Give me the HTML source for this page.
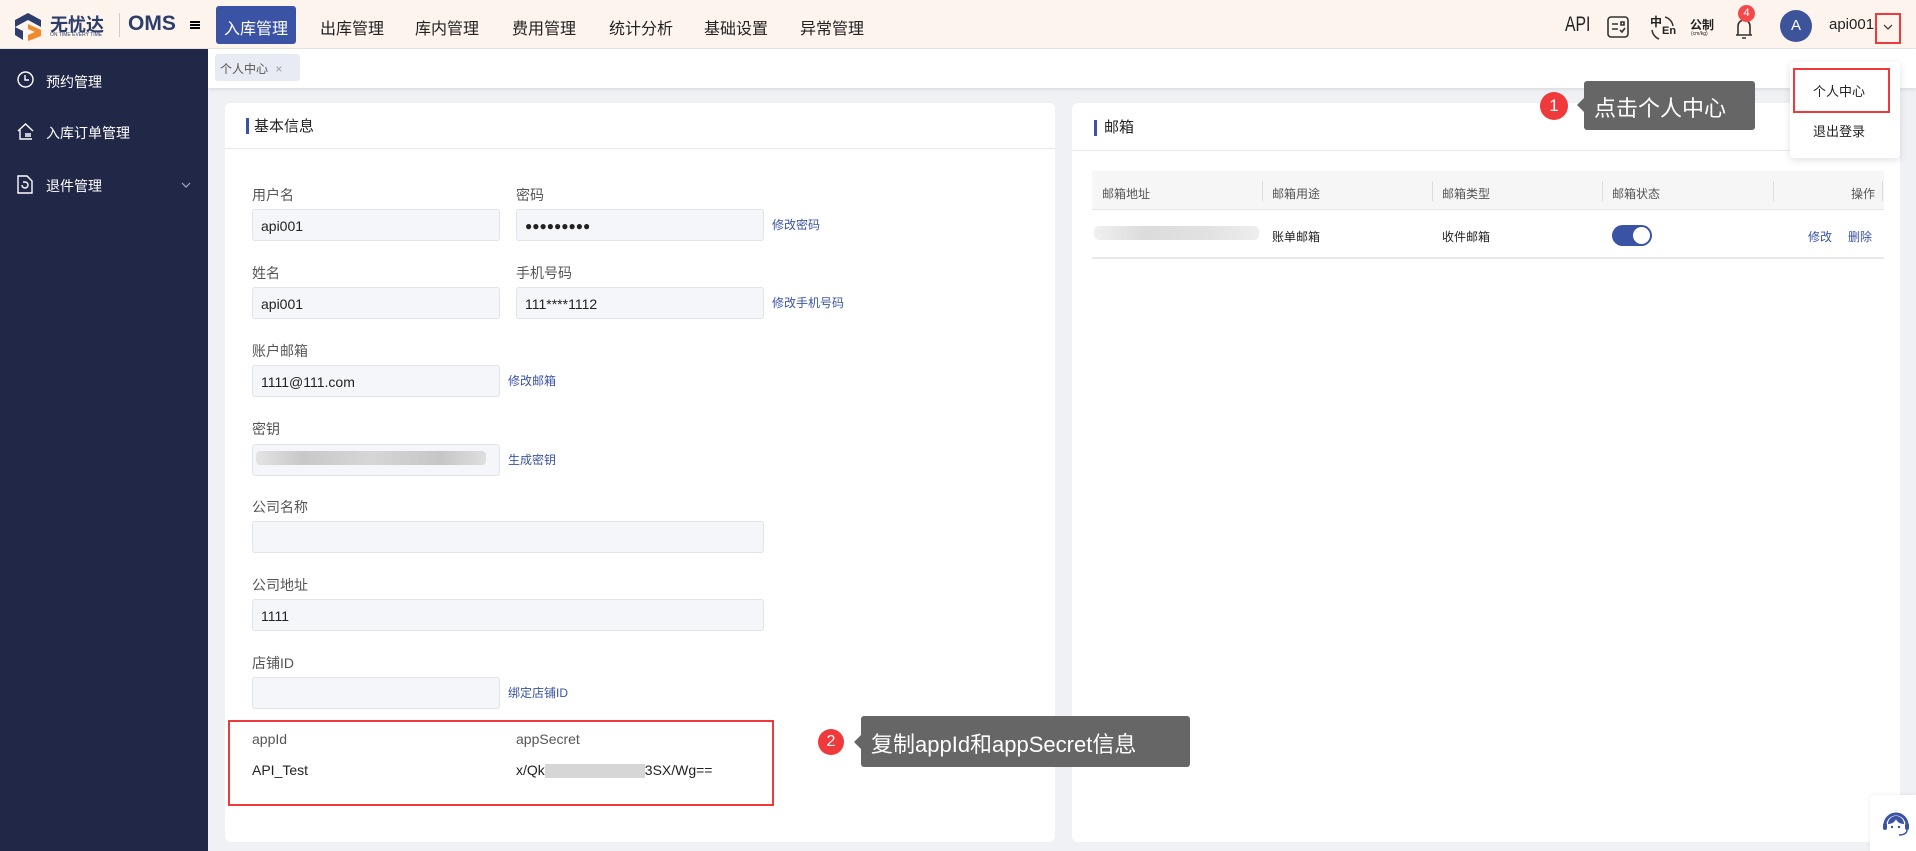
<!DOCTYPE html>
<html><head><meta charset="utf-8">
<style>
*{box-sizing:border-box;margin:0;padding:0}
body{width:1916px;height:851px;overflow:hidden;background:#eff1f5;font-family:"Liberation Sans","Noto Sans CJK SC",sans-serif;position:relative;color:#222}
.abs{position:absolute}
.hdr{left:0;top:0;width:1916px;height:49px;background:#fdf4ee;border-bottom:1px solid #e3e3e3}
.nav{top:15px;font-size:16px;color:#222}
.side{left:0;top:49px;width:208px;height:802px;background:#212847}
.si{left:46px;font-size:14px;color:#fff}
.panel{background:#fff;border-radius:6px}
.lbl{font-size:14px;color:#555}
.inp{background:#f5f6fa;border:1px solid #dfe3ea;border-radius:3px;height:32px;font-size:14px;padding:8px 8px;color:#222}
.lnk{font-size:12px;color:#3a53a4}
.th{font-size:12px;color:#555;top:185px}
</style></head><body>
<div class="abs hdr"></div>
<!-- logo -->
<svg class="abs" style="left:13px;top:12px" width="30" height="30" viewBox="0 0 30 30"><path d="M15 1 L28 8 L28 15 L15 8 L2 15 L2 8 Z" fill="#2d3e6b"/><path d="M2 15 L10 19 L10 28 L2 23Z" fill="#2d3e6b"/><path d="M15 12 L28 18 L28 24 L15 29 L15 23 L22 20 L15 17Z" fill="#f08a2c"/></svg>
<div class="abs" style="left:50px;top:11px;font-size:18px;font-weight:bold;color:#2d3e6b">无忧达</div>
<div class="abs" style="left:50px;top:32px;font-size:5px;color:#2d3e6b">ON TIME EVERY TIME</div>
<div class="abs" style="left:119px;top:13px;width:1px;height:24px;background:#ccc"></div>
<div class="abs" style="left:128px;top:12px;font-size:21px;font-weight:bold;color:#2d3e6b">OMS</div>
<div class="abs" style="left:190px;top:21px;width:10px;height:2px;background:#000;box-shadow:0 3px 0 #000,0 6px 0 #000"></div>
<div class="abs" style="left:216px;top:6px;width:80px;height:38px;background:#3a53a4;border-radius:3px"></div>
<div class="abs nav" style="left:224px;color:#fff">入库管理</div>
<div class="abs nav" style="left:320px">出库管理</div>
<div class="abs nav" style="left:415px">库内管理</div>
<div class="abs nav" style="left:512px">费用管理</div>
<div class="abs nav" style="left:609px">统计分析</div>
<div class="abs nav" style="left:704px">基础设置</div>
<div class="abs nav" style="left:800px">异常管理</div>
<!-- right icons -->
<div class="abs" style="left:1565px;top:13px;font-size:21px;transform:scaleX(.75);transform-origin:left">API</div>
<svg class="abs" style="left:1607px;top:16px" width="22" height="22" viewBox="0 0 22 22" fill="none" stroke="#333" stroke-width="1.6"><rect x="1" y="1" width="20" height="20" rx="3"/><path d="M5 8h6M5 13h6M14 6h3v3h-3zM13 14l2 2 3-4"/></svg>
<div class="abs" style="left:1650px;top:13px;font-size:12px;font-weight:bold">中</div>
<div class="abs" style="left:1662px;top:25px;font-size:11px;font-weight:bold">En</div>
<svg class="abs" style="left:1648px;top:14px" width="30" height="28" viewBox="0 0 30 28" fill="none" stroke="#333" stroke-width="1.5"><path d="M17 3a11 11 0 0 1 8 9M4 16a11 11 0 0 0 7 9"/></svg>
<div class="abs" style="left:1690px;top:16px;font-size:12px;font-weight:bold">公制</div>
<div class="abs" style="left:1691px;top:31px;font-size:5px">(cm/kg)</div>
<svg class="abs" style="left:1735px;top:17px" width="18" height="24" viewBox="0 0 18 24" fill="none" stroke="#333" stroke-width="1.6"><path d="M3 18V9a6 6 0 0 1 12 0v9M1 18h16M7 21h4"/></svg>
<div class="abs" style="left:1738px;top:5px;width:17px;height:17px;border-radius:50%;background:#f5484a;color:#fff;font-size:11px;text-align:center;line-height:17px">4</div>
<div class="abs" style="left:1780px;top:10px;width:32px;height:32px;border-radius:50%;background:#3d549b;color:#fff;font-size:15px;text-align:center;line-height:32px">A</div>
<div class="abs" style="left:1829px;top:16px;font-size:15px">api001</div>
<div class="abs" style="left:1875px;top:13px;width:26px;height:31px;border:2px solid #f0393a"></div>
<svg class="abs" style="left:1883px;top:24px" width="10" height="7" viewBox="0 0 10 7" fill="none" stroke="#444" stroke-width="1.3"><path d="M1 1l4 4 4-4"/></svg>

<!-- sidebar -->
<div class="abs side"></div>
<svg class="abs" style="left:17px;top:71px" width="17" height="17" viewBox="0 0 17 17" fill="none" stroke="#fff" stroke-width="1.4"><circle cx="8.5" cy="8.5" r="7.5"/><path d="M8 4v5h4"/></svg>
<div class="abs si" style="top:72px">预约管理</div>
<svg class="abs" style="left:17px;top:123px" width="17" height="17" viewBox="0 0 17 17" fill="none" stroke="#fff" stroke-width="1.4"><path d="M1 8L8.5 1 16 8M3 7v9h12M8 11h6M8 13h6"/></svg>
<div class="abs si" style="top:123px">入库订单管理</div>
<svg class="abs" style="left:17px;top:175px" width="16" height="19" viewBox="0 0 16 19" fill="none" stroke="#fff" stroke-width="1.4"><path d="M1 1h9l5 5v12H1zM5 10a3 3 0 1 0 3-3h-2"/></svg>
<div class="abs si" style="top:176px">退件管理</div>
<svg class="abs" style="left:181px;top:182px" width="10" height="7" viewBox="0 0 10 7" fill="none" stroke="#aab" stroke-width="1.2"><path d="M1 1l4 4 4-4"/></svg>

<!-- tab bar -->
<div class="abs" style="left:208px;top:49px;width:1708px;height:39px;background:#fff;box-shadow:0 2px 3px rgba(0,0,0,.08)"></div>
<div class="abs" style="left:215px;top:54px;width:85px;height:27px;background:#e8ebf3;border-radius:3px;font-size:12px;color:#555;padding:6px 5px">个人中心 <span style="color:#999;margin-left:4px">×</span></div>

<!-- left panel -->
<div class="abs panel" style="left:225px;top:103px;width:830px;height:739px"></div>
<div class="abs" style="left:225px;top:148px;width:830px;height:1px;background:#e6e9ef"></div>
<div class="abs" style="left:246px;top:118px;width:3px;height:16px;background:#3a53a4"></div>
<div class="abs" style="left:254px;top:115px;font-size:15px">基本信息</div>

<div class="abs lbl" style="left:252px;top:185px">用户名</div>
<div class="abs inp" style="left:252px;top:209px;width:248px">api001</div>
<div class="abs lbl" style="left:516px;top:185px">密码</div>
<div class="abs inp" style="left:516px;top:209px;width:248px;font-size:12px;padding-top:9px">●●●●●●●●●</div>
<div class="abs lnk" style="left:772px;top:216px">修改密码</div>

<div class="abs lbl" style="left:252px;top:263px">姓名</div>
<div class="abs inp" style="left:252px;top:287px;width:248px">api001</div>
<div class="abs lbl" style="left:516px;top:263px">手机号码</div>
<div class="abs inp" style="left:516px;top:287px;width:248px">111****1112</div>
<div class="abs lnk" style="left:772px;top:294px">修改手机号码</div>

<div class="abs lbl" style="left:252px;top:341px">账户邮箱</div>
<div class="abs inp" style="left:252px;top:365px;width:248px">1111@111.com</div>
<div class="abs lnk" style="left:508px;top:372px">修改邮箱</div>

<div class="abs lbl" style="left:252px;top:419px">密钥</div>
<div class="abs inp" style="left:252px;top:444px;width:248px"></div>
<div class="abs" style="left:256px;top:451px;width:230px;height:14px;background:linear-gradient(90deg,#e4e4e4,#c8c8c8 20%,#d6d6d6 50%,#c6c6c6 80%,#dedede);border-radius:4px"></div>
<div class="abs lnk" style="left:508px;top:451px">生成密钥</div>

<div class="abs lbl" style="left:252px;top:497px">公司名称</div>
<div class="abs inp" style="left:252px;top:521px;width:512px"></div>
<div class="abs lbl" style="left:252px;top:575px">公司地址</div>
<div class="abs inp" style="left:252px;top:599px;width:512px">1111</div>
<div class="abs lbl" style="left:252px;top:653px">店铺ID</div>
<div class="abs inp" style="left:252px;top:677px;width:248px"></div>
<div class="abs lnk" style="left:508px;top:684px">绑定店铺ID</div>

<div class="abs" style="left:228px;top:720px;width:546px;height:86px;border:2px solid #f0393a"></div>
<div class="abs lbl" style="left:252px;top:731px">appId</div>
<div class="abs" style="left:252px;top:762px;font-size:14px">API_Test</div>
<div class="abs lbl" style="left:516px;top:731px">appSecret</div>
<div class="abs" style="left:516px;top:762px;font-size:14px">x/Qk<span style="display:inline-block;width:100px;height:14px;background:#d6d6d6;vertical-align:middle"></span>3SX/Wg==</div>

<!-- right panel -->
<div class="abs panel" style="left:1072px;top:103px;width:828px;height:739px"></div>
<div class="abs" style="left:1072px;top:150px;width:828px;height:1px;background:#e6e9ef"></div>
<div class="abs" style="left:1094px;top:120px;width:3px;height:16px;background:#3a53a4"></div>
<div class="abs" style="left:1104px;top:116px;font-size:15px">邮箱</div>
<div class="abs" style="left:1092px;top:171px;width:792px;height:39px;background:#f6f6f7;border-bottom:1px solid #e8e8e8"></div>
<div class="abs" style="left:1262px;top:181px;width:1px;height:20px;background:#ddd"></div>
<div class="abs" style="left:1432px;top:181px;width:1px;height:20px;background:#ddd"></div>
<div class="abs" style="left:1602px;top:181px;width:1px;height:20px;background:#ddd"></div>
<div class="abs" style="left:1773px;top:181px;width:1px;height:20px;background:#ddd"></div>
<div class="abs" style="left:1882px;top:181px;width:1px;height:20px;background:#ddd"></div>
<div class="abs th" style="left:1102px">邮箱地址</div>
<div class="abs th" style="left:1272px">邮箱用途</div>
<div class="abs th" style="left:1442px">邮箱类型</div>
<div class="abs th" style="left:1612px">邮箱状态</div>
<div class="abs th" style="left:1851px">操作</div>
<div class="abs" style="left:1094px;top:226px;width:165px;height:14px;background:linear-gradient(90deg,#f0f0f0,#dcdcdc 30%,#e2e2e2 70%,#eee);border-radius:5px"></div>
<div class="abs" style="left:1272px;top:228px;font-size:12px">账单邮箱</div>
<div class="abs" style="left:1442px;top:228px;font-size:12px">收件邮箱</div>
<div class="abs" style="left:1612px;top:225px;width:40px;height:21px;border-radius:11px;background:#3a53a4"></div>
<div class="abs" style="left:1633px;top:227px;width:17px;height:17px;border-radius:50%;background:#fff"></div>
<div class="abs" style="left:1808px;top:228px;font-size:12px;color:#3a53a4">修改</div>
<div class="abs" style="left:1848px;top:228px;font-size:12px;color:#3a53a4">删除</div>
<div class="abs" style="left:1092px;top:257px;width:792px;height:2px;background:#e8e8e8"></div>

<!-- callout 2 -->
<div class="abs" style="left:818px;top:729px;width:26px;height:26px;border-radius:50%;background:#f0393a;color:#fff;font-size:16px;text-align:center;line-height:26px">2</div>
<div class="abs" style="left:854px;top:735px;width:0;height:0;border:7px solid transparent;border-right-color:#666;border-left:0"></div>
<div class="abs" style="left:861px;top:716px;width:329px;height:51px;background:#666;border-radius:3px;color:#fff;font-size:22px;padding:11px 10px;white-space:nowrap">复制appId和appSecret信息</div>

<!-- callout 1 -->
<div class="abs" style="left:1540px;top:92px;width:28px;height:28px;border-radius:50%;background:#f0393a;color:#fff;font-size:17px;text-align:center;line-height:28px">1</div>
<div class="abs" style="left:1577px;top:98px;width:0;height:0;border:7px solid transparent;border-right-color:#666;border-left:0"></div>
<div class="abs" style="left:1584px;top:81px;width:171px;height:49px;background:#666;border-radius:3px;color:#fff;font-size:22px;padding:10px 10px;white-space:nowrap">点击个人中心</div>

<!-- dropdown -->
<div class="abs" style="left:1790px;top:62px;width:110px;height:96px;background:#fff;border-radius:4px;box-shadow:0 2px 8px rgba(0,0,0,.12)"></div>
<div class="abs" style="left:1793px;top:68px;width:97px;height:45px;border:2px solid #f0393a"></div>
<div class="abs" style="left:1813px;top:81px;font-size:13px">个人中心</div>
<div class="abs" style="left:1813px;top:121px;font-size:13px">退出登录</div>

<!-- service -->
<div class="abs" style="left:1870px;top:795px;width:46px;height:56px;background:#fff;border-radius:5px 0 0 0;box-shadow:0 0 6px rgba(0,0,0,.08)"></div>
<svg class="abs" style="left:1882px;top:807px" width="28" height="30" viewBox="0 0 28 30"><path d="M3 18a11 11 0 0 1 22 0" fill="none" stroke="#3a53a4" stroke-width="3"/><path d="M6 17a8 8 0 0 1 16 0c-4 0-7-2-8-5-1 3-4 5-8 5z" fill="#3a53a4"/><circle cx="10" cy="20" r="1.2" fill="#3a53a4"/><circle cx="17" cy="20" r="1.2" fill="#3a53a4"/><rect x="1" y="16" width="4" height="7" rx="2" fill="#3a53a4"/><rect x="23" y="16" width="4" height="7" rx="2" fill="#3a53a4"/><path d="M25 23c0 3-3 5-8 5" fill="none" stroke="#3a53a4" stroke-width="1.5"/></svg>
</body></html>
